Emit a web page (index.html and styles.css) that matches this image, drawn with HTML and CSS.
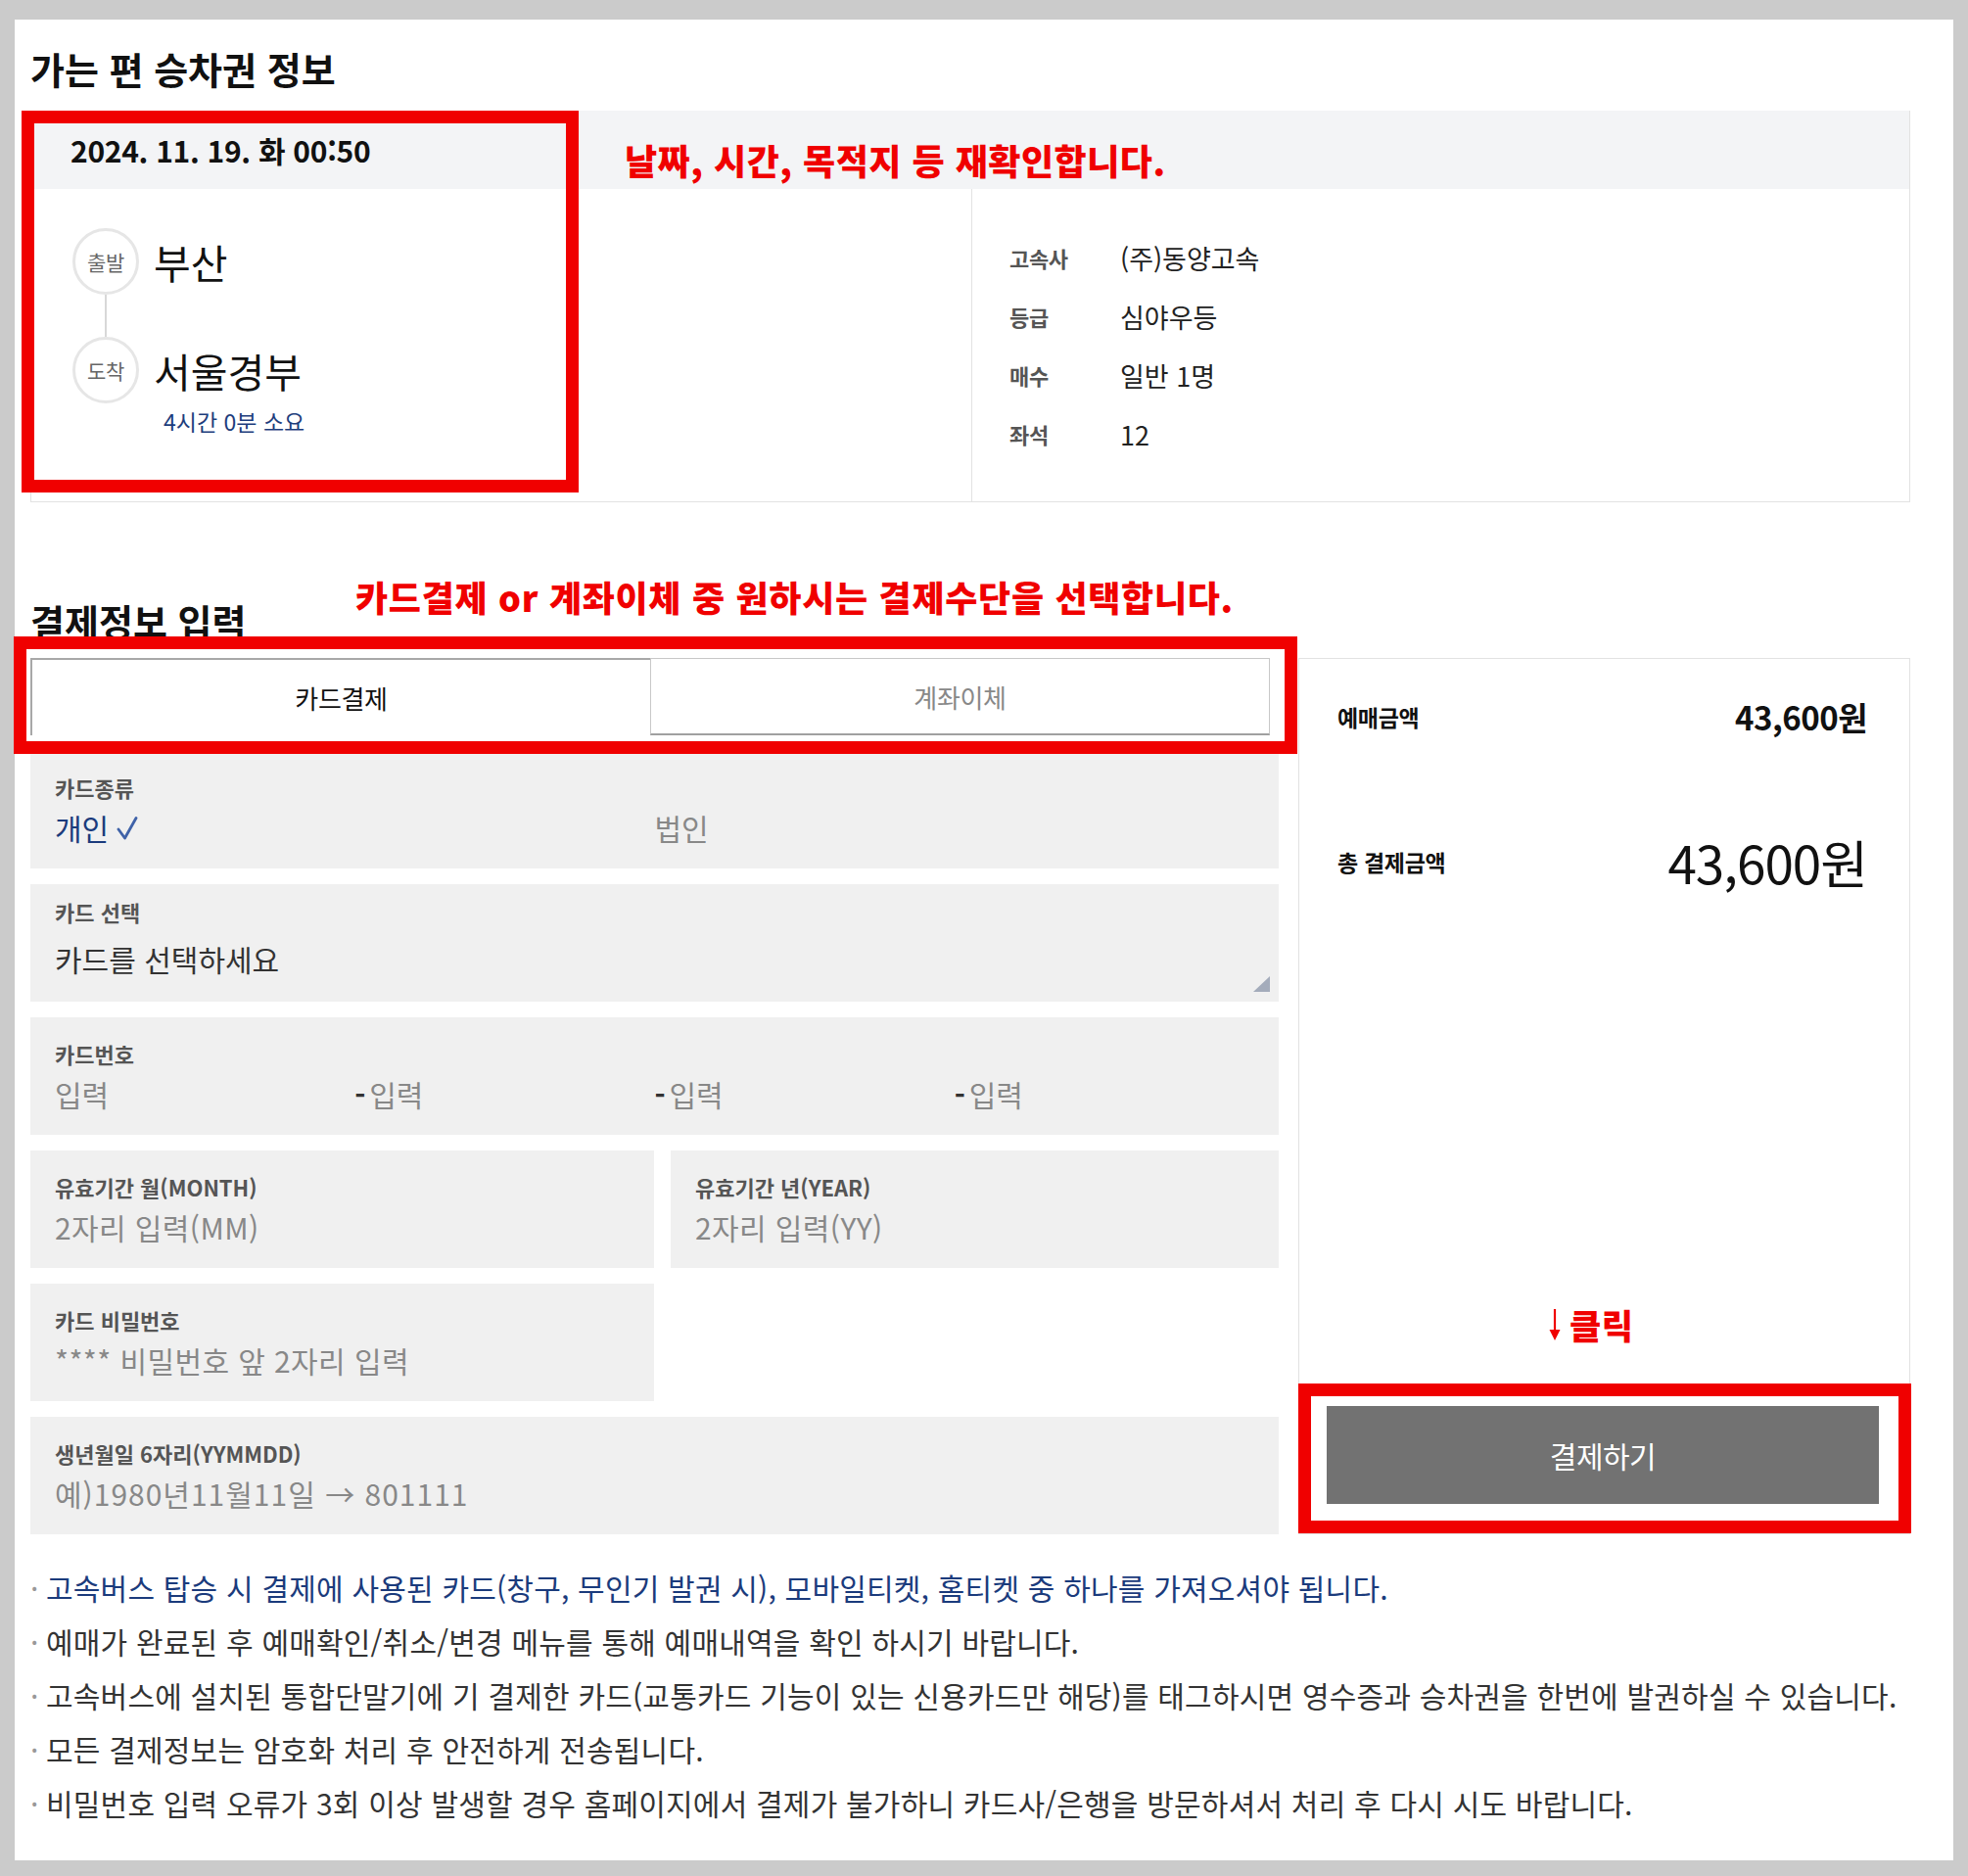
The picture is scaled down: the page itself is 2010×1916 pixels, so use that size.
FILE: index.html
```html
<!DOCTYPE html>
<html lang="ko">
<head>
<meta charset="utf-8">
<title>승차권 결제</title>
<link rel="stylesheet" href="styles.css">
</head>
<body>
<div class="page">
  <h2 class="sec-title t1">가는 편 승차권 정보</h2>

  <div class="ticket">
    <div class="ticket-head">
      <div class="date">2024. 11. 19. 화 00:50</div>
    </div>
    <div class="ticket-body">
      <div class="route">
        <div class="stop"><span class="dot">출발</span><span class="place">부산</span></div>
        <div class="connector"></div>
        <div class="stop"><span class="dot">도착</span><span class="place">서울경부</span></div>
        <div class="duration">4시간 0분 소요</div>
      </div>
      <dl class="info">
        <div class="info-row"><dt>고속사</dt><dd>(주)동양고속</dd></div>
        <div class="info-row"><dt>등급</dt><dd>심야우등</dd></div>
        <div class="info-row"><dt>매수</dt><dd>일반 1명</dd></div>
        <div class="info-row"><dt>좌석</dt><dd>12</dd></div>
      </dl>
    </div>
  </div>

  <h2 class="sec-title t2">결제정보 입력</h2>

  <div class="pay">
    <div class="form">
      <div class="tabs">
        <div class="tab active">카드결제</div>
        <div class="tab off">계좌이체</div>
      </div>

      <div class="field">
        <div class="f-label">카드종류</div>
        <div class="f-value cols2">
          <span class="sel">개인<svg class="check" width="22" height="24" viewBox="0 0 22 24"><path d="M2 13 L8.5 22 L20 1.5" fill="none" stroke="#3f62a8" stroke-width="2.8" stroke-linejoin="round" stroke-linecap="round"/></svg></span>
          <span>법인</span>
        </div>
      </div>

      <div class="field select">
        <div class="f-label">카드 선택</div>
        <div class="f-value dark">카드를 선택하세요</div>
        <svg class="grip" width="17" height="16" viewBox="0 0 17 16"><polygon points="17,0 17,16 0,16" fill="#a4acbb"/></svg>
      </div>

      <div class="field">
        <div class="f-label">카드번호</div>
        <div class="f-value cols4">
          <span>입력</span>
          <span><b class="dash">-</b>입력</span>
          <span><b class="dash">-</b>입력</span>
          <span><b class="dash">-</b>입력</span>
        </div>
      </div>

      <div class="grid2">
        <div class="field">
          <div class="f-label">유효기간 월(MONTH)</div>
          <div class="f-value wide">2자리 입력(MM)</div>
        </div>
        <div class="field">
          <div class="f-label">유효기간 년(YEAR)</div>
          <div class="f-value wide">2자리 입력(YY)</div>
        </div>
      </div>

      <div class="grid2">
        <div class="field">
          <div class="f-label">카드 비밀번호</div>
          <div class="f-value wide">**** 비밀번호 앞 2자리 입력</div>
        </div>
      </div>

      <div class="field">
        <div class="f-label">생년월일 6자리(YYMMDD)</div>
        <div class="f-value wider">예)1980년11월11일 → 801111</div>
      </div>
    </div>

    <aside class="summary">
      <div class="sum-row r1">
        <span class="sum-label">예매금액</span>
        <span class="sum-amt">43,600원</span>
      </div>
      <div class="sum-row r2">
        <span class="sum-label">총 결제금액</span>
        <span class="sum-total">43,600원</span>
      </div>
      <button class="pay-btn" type="button">결제하기</button>
    </aside>
  </div>

  <ul class="notice">
    <li class="em">고속버스 탑승 시 결제에 사용된 카드(창구, 무인기 발권 시), 모바일티켓, 홈티켓 중 하나를 가져오셔야 됩니다.</li>
    <li>예매가 완료된 후 예매확인/취소/변경 메뉴를 통해 예매내역을 확인 하시기 바랍니다.</li>
    <li>고속버스에 설치된 통합단말기에 기 결제한 카드(교통카드 기능이 있는 신용카드만 해당)를 태그하시면 영수증과 승차권을 한번에 발권하실 수 있습니다.</li>
    <li>모든 결제정보는 암호화 처리 후 안전하게 전송됩니다.</li>
    <li>비밀번호 입력 오류가 3회 이상 발생할 경우 홈페이지에서 결제가 불가하니 카드사/은행을 방문하셔서 처리 후 다시 시도 바랍니다.</li>
  </ul>

  <div class="mark m1"></div>
  <div class="note n1">날짜, 시간, 목적지 등 재확인합니다.</div>
  <div class="note n2">카드결제 or 계좌이체 중 원하시는 결제수단을 선택합니다.</div>
  <div class="mark m2"></div>
  <div class="note n3"><svg class="arrow" width="14" height="32" viewBox="0 0 14 32"><line x1="7" y1="0" x2="7" y2="23" stroke="#f00000" stroke-width="2.2"/><polygon points="1.5,21 12.5,21 7,32" fill="#f00000"/></svg>클릭</div>
  <div class="mark m3"></div>
</div>
</body>
</html>
```

FILE: styles.css
```css
* {
  box-sizing: border-box;
  margin: 0;
  padding: 0;
}

html,
body {
  background: #cbcbcb;
}

body {
  font-family: "Noto Sans CJK KR", "Noto Sans", sans-serif;
  color: #222;
  letter-spacing: -0.02em;
  padding: 20px 15px 16px;
}

.page {
  position: relative;
  background: #fff;
  width: 1980px;
  height: 1880px;
  padding: 28px 44px 0 16px;
}

/* section titles */
.sec-title {
  font-size: 38px;
  line-height: 44px;
  font-weight: 700;
  letter-spacing: 0;
  color: #111;
}

.t1 {
  margin-bottom: 21px;
}

.t2 {
  margin-top: 99px;
  margin-bottom: 16px;
}

/* ticket card */
.ticket {
  border: 1px solid #e2e2e2;
  border-top: 0;
}

.ticket-head {
  height: 80px;
  background: #f3f4f6;
  padding-left: 40px;
  display: flex;
  align-items: center;
}

.date {
  font-size: 30px;
  font-weight: 700;
  letter-spacing: -0.3px;
  color: #111;
}

.ticket-body {
  display: grid;
  grid-template-columns: 960px 1fr;
  height: 319px;
}

.route {
  padding: 40px 0 0 42px;
}

.stop {
  display: flex;
  align-items: center;
}

.dot {
  width: 68px;
  height: 68px;
  border-radius: 50%;
  border: 3px solid #e6e6e6;
  display: flex;
  align-items: center;
  justify-content: center;
  font-size: 21px;
  color: #666;
  flex: none;
}

.place {
  font-size: 41px;
  margin-left: 15px;
  color: #111;
  letter-spacing: 0;
}

.connector {
  width: 2px;
  height: 43px;
  background: #d8d8d8;
  margin-left: 33px;
}

.duration {
  font-size: 23px;
  line-height: 30px;
  color: #1d3d7c;
  letter-spacing: 0;
  margin: 3px 0 0 93px;
}

.info {
  border-left: 1px solid #e2e2e2;
  padding: 40px 0 0 38px;
}

.info-row {
  display: flex;
  align-items: center;
  height: 60px;
}

.info dt {
  width: 113px;
  font-size: 22px;
  font-weight: 700;
  color: #555;
}

.info dd {
  font-size: 27px;
  letter-spacing: 0;
  color: #222;
}

/* payment */
.pay {
  display: flex;
  gap: 20px;
  align-items: stretch;
}

.form {
  width: 1275px;
  display: flex;
  flex-direction: column;
  gap: 16px;
}

.tabs {
  display: flex;
  height: 79px;
  margin-right: 9px;
}

.tab {
  flex: 1;
  display: flex;
  align-items: center;
  justify-content: center;
  font-size: 26px;
}

.tab.active {
  border-top: 2px solid #a8a8a8;
  border-left: 2px solid #a8a8a8;
  color: #111;
}

.tab.off {
  border: 1px solid #c8c8c8;
  border-bottom: 2px solid #a0a0a0;
  color: #888;
}

.field {
  position: relative;
  background: #f0f0f0;
  height: 120px;
  padding: 22px 25px 0;
}

.f-label {
  font-size: 22px;
  line-height: 30px;
  font-weight: 700;
  letter-spacing: 0;
  color: #555;
}

.f-value {
  font-size: 30px;
  line-height: 38px;
  margin-top: 7px;
  letter-spacing: 0;
  color: #888;
}

.f-value.wide {
  letter-spacing: 0.4px;
}

.f-value.wider {
  letter-spacing: 1px;
}

.field.select {
  padding-top: 13px;
}

.field.select .f-value {
  margin-top: 14px;
}

.f-value.dark {
  color: #333;
}

.cols2 {
  display: grid;
  grid-template-columns: 1fr 1fr;
}

.cols4 {
  display: grid;
  grid-template-columns: repeat(4, 1fr);
}

.sel {
  color: #1b3b7c;
  display: flex;
  align-items: center;
}

.check {
  margin-left: 8px;
  margin-top: 2px;
}

.dash {
  font-weight: 700;
  color: #333;
  display: inline-block;
  width: 15px;
}

.grip {
  position: absolute;
  right: 9px;
  bottom: 10px;
}

.grid2 {
  display: grid;
  grid-template-columns: 637px 1fr;
  gap: 17px;
}

/* summary */
.summary {
  flex: 1;
  border: 1px solid #e2e2e2;
  display: flex;
  flex-direction: column;
  padding: 29px 43px 30px 39px;
}

.sum-row {
  display: flex;
  justify-content: space-between;
  align-items: center;
}

.sum-row.r1 {
  height: 60px;
}

.sum-row.r2 {
  height: 70px;
  margin-top: 83px;
}

.sum-label {
  font-size: 23px;
  font-weight: 700;
  color: #111;
}

.sum-amt {
  font-size: 33px;
  font-weight: 700;
  letter-spacing: -0.5px;
  color: #111;
}

.sum-total {
  font-size: 53px;
  font-weight: 400;
  letter-spacing: -1px;
  color: #111;
}

.pay-btn {
  margin-top: auto;
  height: 100px;
  margin-left: -11px;
  margin-right: -12px;
  background: #727272;
  color: #fff;
  border: 0;
  font-family: inherit;
  font-size: 30px;
  letter-spacing: -0.5px;
}

/* notices */
.notice {
  list-style: none;
  margin-top: 27px;
}

.notice li {
  font-size: 30px;
  line-height: 55px;
  letter-spacing: 0.2px;
  color: #333;
  white-space: nowrap;
}

.notice li::before {
  content: "·";
  display: inline-block;
  width: 16px;
  color: #999;
}

.notice li.em {
  color: #1b3b7c;
}

/* annotations overlay */
.mark {
  position: absolute;
  border: 13px solid #f00000;
}

.m1 {
  left: 7px;
  top: 93px;
  width: 569px;
  height: 390px;
}

.m2 {
  left: -1px;
  top: 630px;
  width: 1311px;
  height: 120px;
}

.m3 {
  left: 1311px;
  top: 1393px;
  width: 626px;
  height: 153px;
}

.note {
  position: absolute;
  color: #f00000;
  font-weight: 900;
  font-size: 36px;
  line-height: 40px;
  letter-spacing: 0.5px;
  white-space: nowrap;
}

.n1 {
  left: 623px;
  top: 123px;
}

.n2 {
  left: 348px;
  top: 569px;
  letter-spacing: 0.7px;
}

.n3 {
  left: 1566px;
  top: 1313px;
  font-size: 35px;
  display: flex;
  align-items: center;
  gap: 8px;
}
```
